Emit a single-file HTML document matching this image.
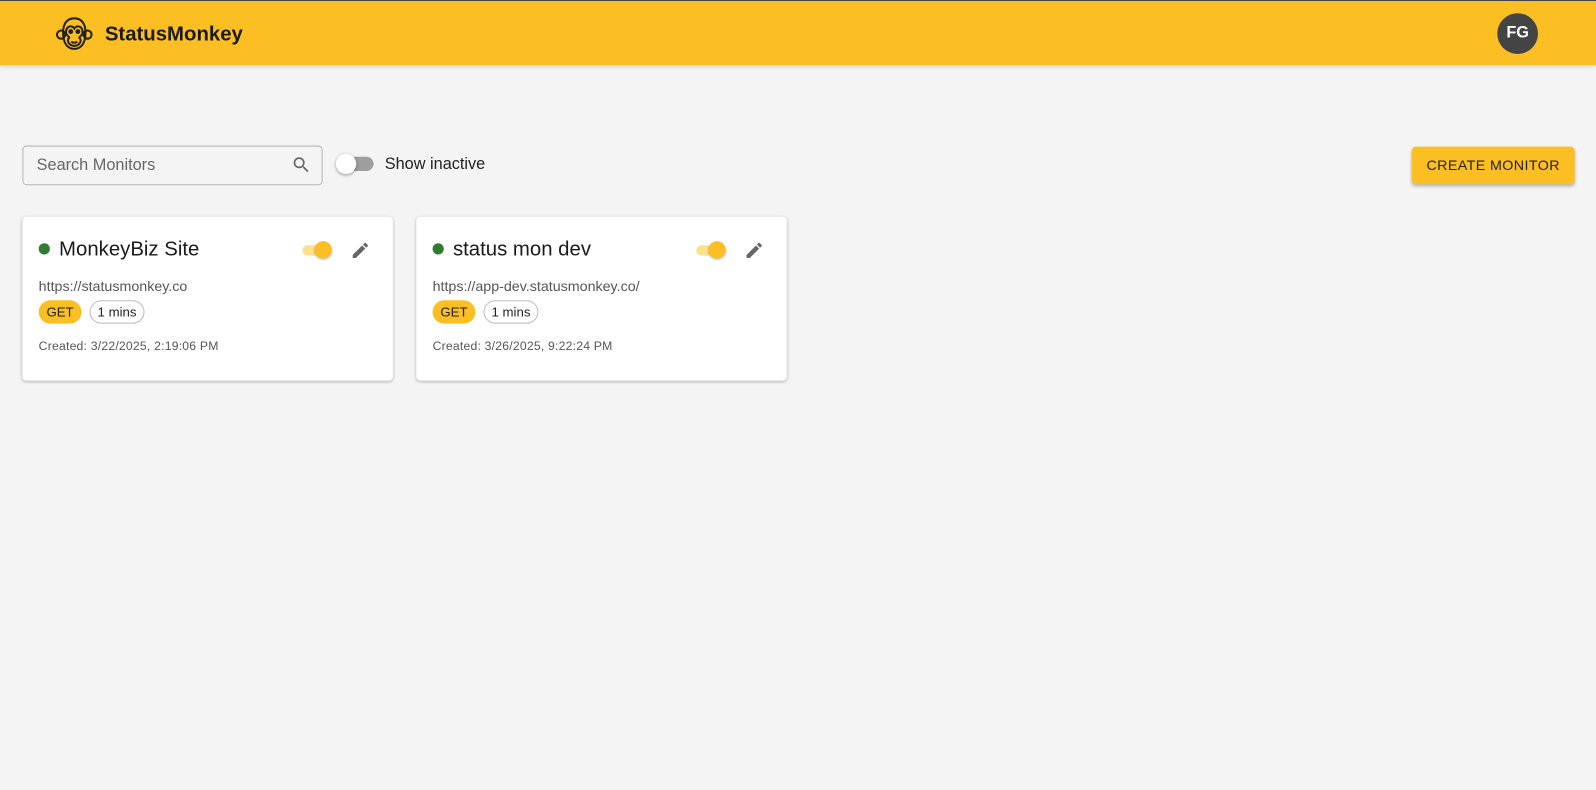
<!DOCTYPE html>
<html><head><style>
*{box-sizing:border-box;margin:0;padding:0}
html,body{width:1596px;height:789px;overflow:hidden;background:#f4f4f4}
body{font-family:"Liberation Sans",Arial,sans-serif;color:#222}
#w{position:absolute;left:0;top:0;width:1568px;height:776px;transform:scale(1.01786);transform-origin:0 0}
.hdr{position:absolute;left:0;top:0;width:1568px;height:64px;background:#fbbf24;border-top:1px solid #444;box-shadow:0 2px 4px rgba(0,0,0,.15)}
.logo{position:absolute;left:55px;top:15px}
.brand{position:absolute;left:103px;top:22px;font-size:20px;font-weight:bold;color:#1a1a1a}
.av{position:absolute;left:1471px;top:12px;width:40px;height:40px;border-radius:50%;background:#444;color:#fff;font-weight:bold;font-size:16px;text-align:center;line-height:40px}
.search{position:absolute;left:22px;top:143px;width:295px;height:39px;border:1px solid #b5b5b5;border-radius:4px;background:#f4f4f4}
.search span{position:absolute;left:13px;top:10px;font-size:16px;color:#666}
.search svg{position:absolute;right:10px;top:8px}
.tg{position:absolute;left:333px;top:154px;width:34px;height:14px;border-radius:7px;background:#9e9e9e}
.tg i{position:absolute;left:-3px;top:-3px;width:20px;height:20px;border-radius:50%;background:#fff;box-shadow:0 1px 3px rgba(0,0,0,.4)}
.si{position:absolute;left:378px;top:153px;font-size:16px;color:#222}
.btn{position:absolute;left:1387px;top:144px;width:160px;height:37px;background:#fbbf24;border-radius:4px;box-shadow:0 2px 3px rgba(0,0,0,.25);font-size:14px;letter-spacing:.4px;color:#222;text-align:center;line-height:37px}
.card{position:absolute;top:213px;width:364px;height:161px;background:#fff;border-radius:4px;box-shadow:0 1px 3px rgba(0,0,0,.25)}
.dot{position:absolute;left:16px;top:26px;width:11px;height:11px;border-radius:50%;background:#2e7d32}
.tt{position:absolute;left:36px;top:21px;font-size:20px;color:#1a1a1a}
.sw{position:absolute;left:275px;top:28px;width:26px;height:10px;border-radius:5px;background:#fde08a}
.sw i{position:absolute;left:12px;top:-4px;width:17px;height:17px;border-radius:50%;background:#fbbf24;box-shadow:0 1px 2px rgba(0,0,0,.3)}
.ed{position:absolute;left:322px;top:23px}
.url{position:absolute;left:16px;top:60px;font-size:14px;color:#555}
.get{position:absolute;left:16px;top:82px;width:42px;height:23px;border-radius:12px;background:#fbbf24;font-size:13px;text-align:center;line-height:23px;color:#222}
.min{position:absolute;left:66px;top:82px;width:54px;height:23px;border-radius:12px;border:1px solid #bbb;font-size:13px;text-align:center;line-height:21px;color:#222}
.cr{position:absolute;left:16px;top:120px;font-size:12px;color:#555;letter-spacing:.2px}
</style></head><body><div id="w">
<div class="hdr">
<svg class="logo" width="36" height="34" viewBox="0 0 36 34" fill="none" stroke="#222" stroke-width="2"><circle cx="5" cy="18" r="4"/><circle cx="31" cy="18" r="4"/><path d="M7 16C7 7 11 2 18 2S29 7 29 16C29 26 25 32 18 32S7 26 7 16Z"/><path d="M10 14C11 9 16 9 18 12C20 9 25 9 26 14C27 18 24 19 23 21C26 24 23 29 18 29S10 24 13 21C12 19 9 18 10 14Z"/><circle cx="14.5" cy="15" r="1.4" fill="#222"/><circle cx="21.5" cy="15" r="1.4" fill="#222"/><path d="M15 25Q18 27 21 25"/></svg>
<div class="brand">StatusMonkey</div>
<div class="av">FG</div>
</div>
<div class="search"><span>Search Monitors</span><svg width="20" height="20" viewBox="0 0 24 24"><path fill="#666" d="M15.5 14h-.79l-.28-.27A6.47 6.47 0 0 0 16 9.5 6.5 6.5 0 1 0 9.5 16c1.61 0 3.09-.59 4.23-1.570l.27.28v.79l5 4.99L20.49 19l-4.99-5zm-6 0C7.01 14 5 11.99 5 9.5S7.01 5 9.5 5 14 7.01 14 9.5 11.990 14 9.5 14z"/></svg></div>
<div class="tg"><i></i></div>
<div class="si">Show inactive</div>
<div class="btn">CREATE MONITOR</div>
<div class="card" style="left:22px"><div class="dot"></div><div class="tt">MonkeyBiz Site</div><div class="sw"><i></i></div><svg class="ed" width="20" height="20" viewBox="0 0 24 24"><path fill="#666" d="M3 17.25V21h3.75L17.81 9.94l-3.750-3.75L3 17.25zM20.71 7.04a1 1 0 0 0 0-1.41l-2.34-2.34a1 1 0 0 0-1.41 0l-1.83 1.83 3.75 3.75 1.83-1.83z"/></svg><div class="url">https://statusmonkey.co</div><div class="get">GET</div><div class="min">1 mins</div><div class="cr">Created: 3/22/2025, 2:19:06 PM</div></div>
<div class="card" style="left:409px"><div class="dot"></div><div class="tt">status mon dev</div><div class="sw"><i></i></div><svg class="ed" width="20" height="20" viewBox="0 0 24 24"><path fill="#666" d="M3 17.25V21h3.75L17.81 9.94l-3.750-3.75L3 17.25zM20.71 7.04a1 1 0 0 0 0-1.41l-2.34-2.34a1 1 0 0 0-1.41 0l-1.83 1.83 3.75 3.75 1.83-1.83z"/></svg><div class="url">https://app-dev.statusmonkey.co/</div><div class="get">GET</div><div class="min">1 mins</div><div class="cr">Created: 3/26/2025, 9:22:24 PM</div></div>
</div></body></html>
